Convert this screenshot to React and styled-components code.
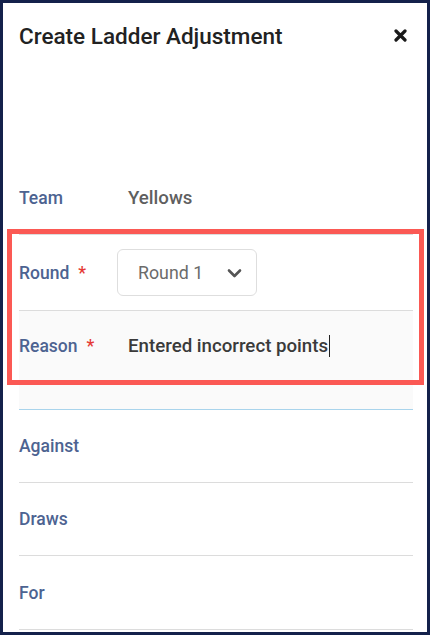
import React from "react";
import styled, { createGlobalStyle } from "styled-components";

const GlobalStyle = createGlobalStyle`
  html, body {
    margin: 0;
    padding: 0;
    background: #14214b;
  }
  * {
    box-sizing: border-box;
  }
`;

const Modal = styled.div`
  position: relative;
  width: 430px;
  height: 635px;
  border: 3px solid #14214b;
  background: #ffffff;
  overflow: hidden;
  font-family: Roboto, "Liberation Sans", sans-serif;
`;

const Header = styled.div`
  display: flex;
  justify-content: space-between;
  align-items: flex-start;
  padding: 20px 20px 0 16px;
  height: 159px;
`;

const Title = styled.h1`
  margin: 0;
  font-size: 22.5px;
  line-height: 26px;
  font-weight: 500;
  color: #222222;
`;

const CloseButton = styled.button`
  border: 0;
  background: none;
  padding: 0;
  margin-top: 6px;
  width: 13px;
  height: 13px;
  display: flex;
  cursor: pointer;
`;

const Rows = styled.div`
  padding: 0 14px 0 16px;
`;

const Row = styled.div`
  display: flex;
  align-items: ${(p) => (p.$tall ? "baseline" : "center")};
  height: ${(p) => p.$height || 73}px;
  padding-top: ${(p) => (p.$tall ? 24 : 0)}px;
  border-bottom: 1px solid ${(p) => (p.$focused ? "#a9d4ec" : p.$line ? "#dcdcdc" : "transparent")};
  background: ${(p) => (p.$focused ? "#fafafa" : "transparent")};
`;

const Label = styled.div`
  width: 98px;
  flex-shrink: 0;
  font-size: 17.5px;
  font-weight: 500;
  color: #4d6391;
`;

const Required = styled.span`
  color: #e53935;
  margin-left: 9px;
  font-weight: 500;
`;

const Value = styled.div`
  padding-left: 11px;
  font-size: 18.7px;
  font-weight: 500;
  color: ${(p) => (p.$muted ? "#5f5f5f" : "#3a3a3a")};
`;

const Caret = styled.span`
  display: inline-block;
  width: 1px;
  height: 22px;
  margin-left: 1px;
  vertical-align: -5px;
  background: #222;
`;

const Select = styled.div`
  width: 140px;
  height: 47px;
  border: 1px solid #dedede;
  border-radius: 6px;
  display: flex;
  align-items: center;
  justify-content: space-between;
  padding: 0 14px 0 20px;
  font-size: 17.8px;
  color: #6b6b6b;
`;

const Highlight = styled.div`
  position: absolute;
  left: 4px;
  top: 226px;
  width: 417px;
  height: 156px;
  border: 5px solid #fb5954;
  pointer-events: none;
`;

const CloseIcon = () => (
  <svg width="13" height="13" viewBox="0 0 13 13">
    <path d="M2 2 L11 11 M11 2 L2 11" stroke="#1a1a1a" strokeWidth="3.2" strokeLinecap="round" />
  </svg>
);

const Chevron = () => (
  <svg width="15" height="10" viewBox="0 0 15 10">
    <path d="M2 2.5 L7.5 8 L13 2.5" fill="none" stroke="#555" strokeWidth="2.6" strokeLinecap="round" strokeLinejoin="round" />
  </svg>
);

export default function App() {
  return (
    <>
      <GlobalStyle />
      <Modal>
        <Header>
          <Title>Create Ladder Adjustment</Title>
          <CloseButton aria-label="Close">
            <CloseIcon />
          </CloseButton>
        </Header>
        <Rows>
          <Row $line>
            <Label>Team</Label>
            <Value $muted>Yellows</Value>
          </Row>
          <Row $height={76} $line>
            <Label>
              Round<Required>*</Required>
            </Label>
            <Select>
              Round 1
              <Chevron />
            </Select>
          </Row>
          <Row $height={99} $tall $focused>
            <Label>
              Reason<Required>*</Required>
            </Label>
            <Value>
              Entered incorrect points
              <Caret />
            </Value>
          </Row>
          <Row $line>
            <Label>Against</Label>
          </Row>
          <Row $line>
            <Label>Draws</Label>
          </Row>
          <Row $line $height={74}>
            <Label>For</Label>
          </Row>
        </Rows>
        <Highlight />
      </Modal>
    </>
  );
}
